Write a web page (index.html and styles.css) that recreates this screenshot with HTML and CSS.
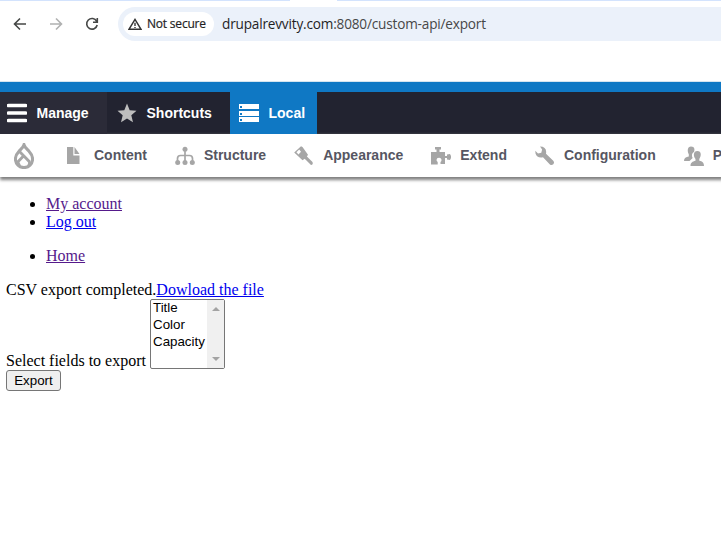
FILE: index.html
```
<!DOCTYPE html>
<html lang="en">
<head>
<meta charset="utf-8">
<title>Export</title>
<link rel="stylesheet" href="styles.css">
</head>
<body>
<header class="browser">
  <div class="tabstrip"><span class="tab"></span></div>
  <div class="navbar">
    <svg class="nav-icon" viewBox="0 0 16 16"><path d="M14 8H3M8 2.5 2.5 8 8 13.500"/></svg>
    <svg class="nav-icon disabled" viewBox="0 0 16 16"><path d="M2 8h11M8 2.500 13.500 8 8 13.500"/></svg>
    <svg class="nav-icon" viewBox="0 0 16 16"><path d="M12.700 5.300A5.300 5.300 0 1 0 13.200 9M13.300 2v4.300H9"/></svg>
    <div class="address">
      <span class="security">
        <svg class="warning" viewBox="0 0 14 12"><path d="M7 1.400 13 11.300H1ZM7 4.800v3.200M7 8.900v1.200"/></svg>
        <span class="security-text">Not secure</span>
      </span>
      <span class="url"><span class="host">drupalrevvity.com</span>:8080/custom-api/export</span>
    </div>
  </div>
</header>
<div class="env-strip"></div>
<nav class="bar">
  <a class="bar-item manage"><svg class="bar-icon" viewBox="0 0 20 20"><path d="M1.500 2.500h17M1.500 10h17M1.500 17.500h17" fill="none" stroke="#fff" stroke-width="3.600" stroke-linecap="round"/></svg>Manage</a>
  <a class="bar-item shortcuts"><svg class="bar-icon" viewBox="0 0 20 20"><path fill="#bebebe" d="m10 .5 2.700 6.700 6.800.5-5.200 4.600 1.700 7L10 15.500l-6 3.800 1.700-7L.5 7.700l6.800-.5Z"/></svg>Shortcuts</a>
  <a class="bar-item local"><svg class="bar-icon" viewBox="0 0 20 20"><path fill="#fff" d="M0 1h20v5H0zM0 8h20v5H0zM0 14h20v5H0z"/><path fill="#0f78c4" d="M1 3h2v2H1zM1 10h2v2H1zM1 16h2v2H1z"/></svg>Local</a>
</nav>
<nav class="tray">
  <a class="tray-item drop"><svg class="drop-icon" viewBox="0 0 20 26"><path d="M10 1.700c-.8 2.600-2.900 4.200-4.800 6.300C3.100 10.300 1.400 12.600 1.400 16a8.600 8.600 0 0 0 17.200 0c0-3.400-1.700-5.700-3.800-8-1.900-2.100-4-3.700-4.800-6.300Z" fill="none" stroke="#a6a6a6" stroke-width="3"/><path d="m5.500 8.500 9.700 10q1 1.500-.5 4M9.500 13 4.200 18.500q-.5 2 1.500 4" fill="none" stroke="#a6a6a6" stroke-width="2.800"/></svg></a>
  <a class="tray-item content"><svg class="tray-icon" viewBox="0 0 20 20"><path d="M1 1h6.300v8.500h6.200V18H1zM8.500 1l5 7h-5z"/></svg>Content</a>
  <a class="tray-item"><svg class="tray-icon" viewBox="0 0 20 20"><circle cx="10" cy="3.200" r="2.500"/><circle cx="2.700" cy="16.500" r="2.500"/><circle cx="10" cy="16.500" r="2.500"/><circle cx="17.300" cy="16.500" r="2.500"/><path class="line" d="M10 4v12M2.500 16v-3.500q0-3 3-3h9q3 0 3 3V16"/></svg>Structure</a>
  <a class="tray-item"><svg class="tray-icon" viewBox="0 0 20 20"><path fill-rule="evenodd" d="M7 .3 8.500 1 14 8.800 12.900 10.600 18.500 16q1 2.500-1.500 3l-6.300-6.300L8.500 14.200.2 6.500ZM5.200 3.600 2.400 6.300l2.100 2.100L7 5.800Z"/></svg>Appearance</a>
  <a class="tray-item"><svg class="tray-icon" viewBox="0 0 20 20"><path d="M4 1h6v2.500H8.500V6H14v4h2V8.500l3-.5 1 2v2l-1 2-3-.5v-1.500h-2V18H9.500v-2q1-.5 1-1.700a2.300 2.300 0 0 0-5-.2q0 1.200 1.200 1.900v2.500H0V6h5.500V3.500H4z"/></svg>Extend</a>
  <a class="tray-item"><svg class="tray-icon" viewBox="0 0 20 20"><path d="M5 .5q6 0 6.200 5.500l-.2 1.800 7.500 7.200q1.300 1.700-.2 3.300-1.700 1.500-3.400.1L8 11.200Q2 12.300.5 7.500L.3 4.700 3 7.500l3.300-.7.800-3.300Z"/></svg>Configuration</a>
  <a class="tray-item"><svg class="tray-icon" viewBox="0 0 20 20"><path d="M7 .5c4 0 3.800 3.500 3 5.500-2.500 1.500-2.300 4-1.300 6L5.500 15H0c0-3 2-4 4.800-4.500V8.200C3 5 3.500.5 7 .5Z"/><path d="M13.300 5c4.500 0 4 5 2 8v1.700c3 .6 4.700 1.800 4.700 5.300H6.500c0-3.500 2-4.500 5-5.300V13c-2.500-3-2.200-8 1.800-8Z"/></svg>P</a>
</nav>
<main class="page">
  <ul class="menu"><li><a class="visited">My account</a></li><li><a class="link">Log out</a></li></ul>
  <ul class="menu"><li><a class="visited">Home</a></li></ul>
  <div class="status">CSV export completed.<a class="link">Dowload the file</a></div>
  <div class="field">
    <span class="label">Select fields to export</span>
    <div class="listbox">
      <div class="options"><div>Title</div><div>Color</div><div>Capacity</div></div>
      <div class="scrollbar"><i class="up"></i><i class="down"></i></div>
    </div>
  </div>
  <button class="export">Export</button>
</main>
</body>
</html>
```

FILE: styles.css
```
* { box-sizing: border-box; }
body { margin: 0; width: 721px; height: 554px; overflow: hidden; background: #fff; font: 16px/18px "Liberation Serif", serif; color: #000; }
svg { display: block; flex: none; }
.browser { height: 81px; }
.tabstrip { height: 1px; background: #d3e3fd; display: flex; }
.tab { width: 47px; height: 1px; margin-left: 290px; background: #fff; }
.navbar { display: flex; align-items: center; height: 46px; padding-left: 12px; }
.nav-icon { width: 16px; height: 16px; margin-right: 20px; fill: none; stroke: #454746; stroke-width: 1.6; }
.disabled { stroke: #b0b1b1; }
.address { display: flex; align-items: center; margin-left: -2px; flex: 1; height: 34px; padding-left: 5px; border-radius: 17px 0 0 17px; background: #ebf1fa; }
.security { display: flex; align-items: center; width: 91px; height: 24px; padding-left: 5px; border-radius: 12px; background: #fff; color: #1f1f1f; font: 12px/24px "Open Sans", sans-serif; letter-spacing: -0.2px; }
.warning { width: 14px; height: 12px; margin-right: 5px; fill: none; stroke: #333; stroke-width: 1.4; }
.security-text { white-space: nowrap; -webkit-text-stroke: 0.2px #1f1f1f; }
.url { margin-left: 8px; font: 13.6px/24px "Open Sans", sans-serif; letter-spacing: -0.18px; color: #474747; white-space: nowrap; }
.host { color: #1f1f1f; }
.env-strip { height: 11px; background: #0f78c4; border-top: 1px solid #d5e5ef; }
.bar { display: flex; height: 42px; background: #222330; }
.bar-item { display: flex; align-items: center; color: #fff; font: bold 14px/42px "Liberation Sans", sans-serif; }
.bar-icon { width: 20px; height: 20px; margin-right: 9.5px; }
.manage { width: 107px; padding-left: 7px; background: #2b2b38; }
.shortcuts { width: 123px; padding-left: 10px; }
.local { width: 87px; padding-left: 9px; background: #0f78c4; }
.tray { display: flex; align-items: center; height: 43px; padding-left: 14px; background: #fff; box-shadow: 1px 2px 3px 1px #808080; color: #565662; }
.tray-item { display: flex; align-items: center; flex: none; margin-right: 28px; font: bold 14px/43px "Liberation Sans", sans-serif; }
.tray-item:last-child { margin-right: 0; width: 37px; overflow: hidden; }
.tray-item.drop { margin-right: 32px; }
.drop-icon { width: 20px; height: 26px; }
.tray-icon { width: 20px; height: 20px; margin-right: 9px; fill: #a6a6a6; }
.content .tray-icon { margin-right: 8px; }
.line { fill: none; stroke: #a6a6a6; stroke-width: 1.7; }
.page { padding: 18px 6px 0; }
.menu { margin: 0 0 16px; padding-left: 40px; }
.link { color: #00e; text-decoration: underline; }
.visited { color: #551a8b; text-decoration: underline; }
.field { display: flex; align-items: flex-end; height: 70px; }
.label { width: 144px; margin-bottom: -1px; white-space: nowrap; }
.listbox { display: flex; width: 75px; height: 70px; border: 1px solid #767676; border-radius: 2px; font: 13.333px/17px "Liberation Sans", sans-serif; }
.options { flex: 1; margin-top: -1px; padding-left: 2px; white-space: nowrap; }
.scrollbar { width: 17px; padding: 7px 4px; display: flex; flex-direction: column; justify-content: space-between; align-items: center; background: #f0f0f0; }
.up, .down { border: 4px solid transparent; border-top-width: 0; border-bottom: 4px solid #a3a3a3; }
.down { border-bottom-width: 0; border-top: 4px solid #a3a3a3; }
.export { display: block; width: 55px; height: 21px; margin: 1px 0 0; padding: 0; border: 1px solid #767676; border-radius: 3px; background: #efefef; color: #000; font: 13.333px/17px "Liberation Sans", sans-serif; }
```
